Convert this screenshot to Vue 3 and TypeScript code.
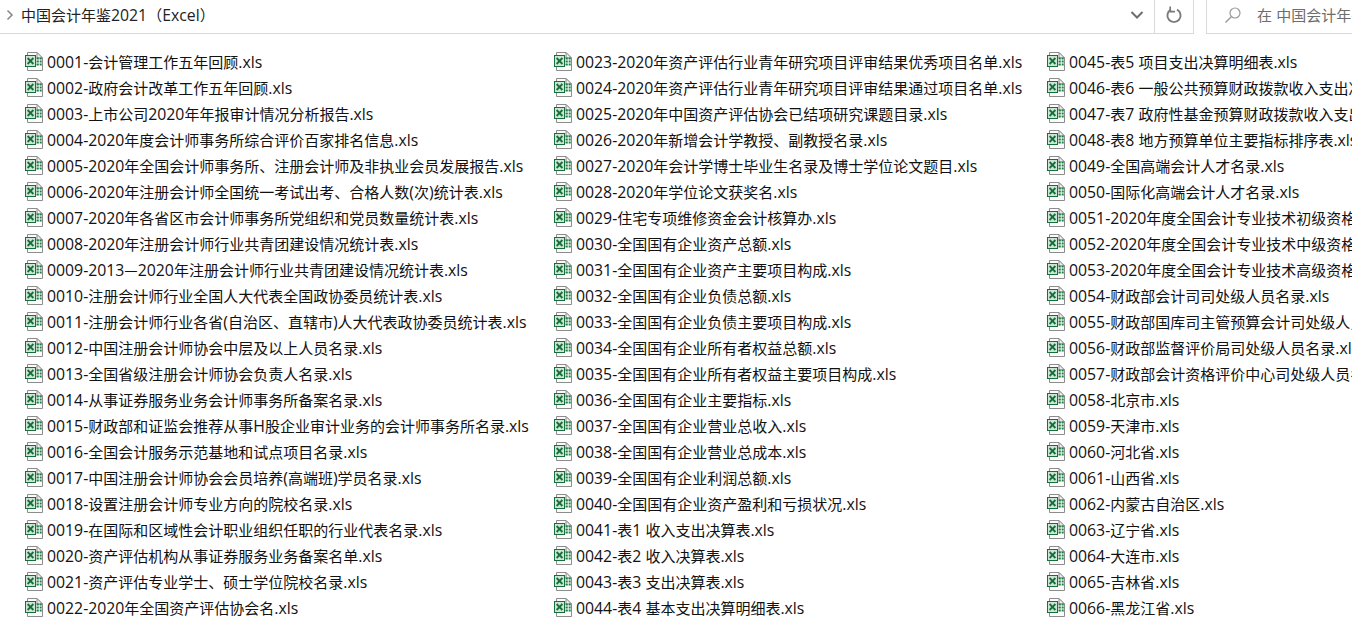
<script setup lang="ts">
interface Run { text: string; latin: boolean }

const runs = (text: string): Run[] =>
  text
    .split(/([\x00-\x7f]+)/)
    .filter((part) => part.length > 0)
    .map((part) => ({ text: part, latin: /^[\x00-\x7f]/.test(part) }))

const title = runs('中国会计年鉴2021（Excel）')
const hint = runs('在 中国会计年鉴2021（Excel）中搜索')

const names: string[][] = [
  [
    '0001-会计管理工作五年回顾.xls',
    '0002-政府会计改革工作五年回顾.xls',
    '0003-上市公司2020年年报审计情况分析报告.xls',
    '0004-2020年度会计师事务所综合评价百家排名信息.xls',
    '0005-2020年全国会计师事务所、注册会计师及非执业会员发展报告.xls',
    '0006-2020年注册会计师全国统一考试出考、合格人数(次)统计表.xls',
    '0007-2020年各省区市会计师事务所党组织和党员数量统计表.xls',
    '0008-2020年注册会计师行业共青团建设情况统计表.xls',
    '0009-2013—2020年注册会计师行业共青团建设情况统计表.xls',
    '0010-注册会计师行业全国人大代表全国政协委员统计表.xls',
    '0011-注册会计师行业各省(自治区、直辖市)人大代表政协委员统计表.xls',
    '0012-中国注册会计师协会中层及以上人员名录.xls',
    '0013-全国省级注册会计师协会负责人名录.xls',
    '0014-从事证券服务业务会计师事务所备案名录.xls',
    '0015-财政部和证监会推荐从事H股企业审计业务的会计师事务所名录.xls',
    '0016-全国会计服务示范基地和试点项目名录.xls',
    '0017-中国注册会计师协会会员培养(高端班)学员名录.xls',
    '0018-设置注册会计师专业方向的院校名录.xls',
    '0019-在国际和区域性会计职业组织任职的行业代表名录.xls',
    '0020-资产评估机构从事证券服务业务备案名单.xls',
    '0021-资产评估专业学士、硕士学位院校名录.xls',
    '0022-2020年全国资产评估协会名.xls',
  ],
  [
    '0023-2020年资产评估行业青年研究项目评审结果优秀项目名单.xls',
    '0024-2020年资产评估行业青年研究项目评审结果通过项目名单.xls',
    '0025-2020年中国资产评估协会已结项研究课题目录.xls',
    '0026-2020年新增会计学教授、副教授名录.xls',
    '0027-2020年会计学博士毕业生名录及博士学位论文题目.xls',
    '0028-2020年学位论文获奖名.xls',
    '0029-住宅专项维修资金会计核算办.xls',
    '0030-全国国有企业资产总额.xls',
    '0031-全国国有企业资产主要项目构成.xls',
    '0032-全国国有企业负债总额.xls',
    '0033-全国国有企业负债主要项目构成.xls',
    '0034-全国国有企业所有者权益总额.xls',
    '0035-全国国有企业所有者权益主要项目构成.xls',
    '0036-全国国有企业主要指标.xls',
    '0037-全国国有企业营业总收入.xls',
    '0038-全国国有企业营业总成本.xls',
    '0039-全国国有企业利润总额.xls',
    '0040-全国国有企业资产盈利和亏损状况.xls',
    '0041-表1 收入支出决算表.xls',
    '0042-表2 收入决算表.xls',
    '0043-表3 支出决算表.xls',
    '0044-表4 基本支出决算明细表.xls',
  ],
  [
    '0045-表5 项目支出决算明细表.xls',
    '0046-表6 一般公共预算财政拨款收入支出决算表.xls',
    '0047-表7 政府性基金预算财政拨款收入支出决算表.xls',
    '0048-表8 地方预算单位主要指标排序表.xls',
    '0049-全国高端会计人才名录.xls',
    '0050-国际化高端会计人才名录.xls',
    '0051-2020年度全国会计专业技术初级资格考试.xls',
    '0052-2020年度全国会计专业技术中级资格考试.xls',
    '0053-2020年度全国会计专业技术高级资格考试.xls',
    '0054-财政部会计司司处级人员名录.xls',
    '0055-财政部国库司主管预算会计司处级人员名录.xls',
    '0056-财政部监督评价局司处级人员名录.xls',
    '0057-财政部会计资格评价中心司处级人员名录.xls',
    '0058-北京市.xls',
    '0059-天津市.xls',
    '0060-河北省.xls',
    '0061-山西省.xls',
    '0062-内蒙古自治区.xls',
    '0063-辽宁省.xls',
    '0064-大连市.xls',
    '0065-吉林省.xls',
    '0066-黑龙江省.xls',
  ],
]

const columns = names.map((col) => col.map((name) => ({ name, runs: runs(name) })))
</script>

<template>
  <div class="explorer">
    <header class="topbar">
      <div class="address">
        <svg class="crumb" width="8" height="12" viewBox="0 0 8 12">
          <path d="M1.5 1.5 L6 6 L1.5 10.5" fill="none" stroke="#8a8a8a" stroke-width="1.6" />
        </svg>
        <span class="path">
          <span v-for="(r, i) in title" :key="i" :class="{ latin: r.latin }">{{ r.text }}</span>
        </span>
        <svg class="drop" width="14" height="10" viewBox="0 0 14 10">
          <path d="M1.5 2 L7 7.5 L12.5 2" fill="none" stroke="#6e6e6e" stroke-width="2" />
        </svg>
      </div>
      <div class="refresh">
        <svg width="18" height="18" viewBox="0 0 18 18">
          <path d="M6 3.6 A6.6 6.6 0 1 0 12 3.6" fill="none" stroke="#7a7a7a" stroke-width="1.9" />
          <path d="M5.2 0.6 L5.2 5.6 L10 5.6" fill="none" stroke="#7a7a7a" stroke-width="1.7" />
        </svg>
      </div>
      <div class="gutter"></div>
      <div class="search">
        <svg class="lens" width="18" height="18" viewBox="0 0 18 18">
          <circle cx="11" cy="7" r="5" fill="none" stroke="#9a9a9a" stroke-width="1.2" />
          <path d="M7.3 10.7 L1.5 16.5" stroke="#9a9a9a" stroke-width="1.4" />
        </svg>
        <span class="hint">
          <span v-for="(r, i) in hint" :key="i" :class="{ latin: r.latin }">{{ r.text }}</span>
        </span>
      </div>
    </header>
    <main class="files">
      <ul v-for="(col, i) in columns" :key="i" class="col" :class="`col${i}`">
        <li v-for="file in col" :key="file.name" class="file">
          <svg class="icon" width="18" height="20" viewBox="0 0 18 20">
            <path d="M2.5 1.5 H12 L17.5 7 V19.5 H2.5 Z" fill="#fcfcfc" stroke="#8c8c8c" />
            <path d="M12 1.5 V7 H17.5 Z" fill="#efefef" stroke="#8c8c8c" />
            <rect x="0.5" y="4.5" width="10" height="11" fill="#cfe6d6" stroke="#17703c" />
            <path d="M2.6 7 L8.4 13 M8.4 7 L2.6 13" stroke="#17703c" stroke-width="1.8" />
            <path d="M11.5 6.5h2.3v2h-2.3zM14.7 6.5h2v2h-2zM11.5 9.5h2.3v2h-2.3zM14.7 9.5h2v2h-2zM11.5 12.5h2.3v2h-2.3zM14.7 12.5h2v2h-2z" fill="#1f8045" />
          </svg>
          <span class="name">
            <span v-for="(r, j) in file.runs" :key="j" :class="{ latin: r.latin }">{{ r.text }}</span>
          </span>
        </li>
      </ul>
    </main>
  </div>
</template>

<style>
html, body { margin: 0; background: #fff; overflow: hidden; }
</style>

<style scoped>
.explorer {
  width: 1352px;
  height: 632px;
  overflow: hidden;
  background: #fff;
  font-family: "Noto Sans CJK SC", "Noto Sans", sans-serif;
  font-size: 15px;
  color: #1a1a1a;
}
.latin {
  font-family: "Open Sans", "Noto Sans", sans-serif;
  font-size: 15.8px;
}
.topbar {
  display: flex;
  height: 34px;
}
.address {
  flex: 0 0 1154px;
  box-sizing: border-box;
  display: flex;
  align-items: center;
  height: 34px;
  border-bottom: 1px solid #d9d9d9;
  padding-left: 6px;
}
.crumb { flex: none; margin-right: 7px; margin-top: -4px; }
.path { line-height: 30px; margin-top: -4px; flex: 1; color: #222; white-space: pre; }
.drop { flex: none; margin-right: 10px; margin-top: -4px; }
.refresh {
  flex: 0 0 40px;
  box-sizing: border-box;
  height: 34px;
  display: flex;
  align-items: center;
  justify-content: center;
  border-left: 1px solid #d9d9d9;
  border-right: 1px solid #d9d9d9;
  border-bottom: 1px solid #d9d9d9;
  padding-bottom: 4px;
}
.gutter { flex: 0 0 12px; }
.search {
  flex: 1;
  min-width: 0;
  box-sizing: border-box;
  height: 34px;
  display: flex;
  align-items: center;
  gap: 15px;
  padding: 0 0 4px 17px;
  border-left: 1px solid #d9d9d9;
  border-bottom: 1px solid #d9d9d9;
  overflow: hidden;
  white-space: pre;
}
.lens { flex: none; }
.hint { flex: none; color: #6d6d6d; }
.files {
  display: flex;
  padding: 15px 0 0 25px;
}
.col { list-style: none; margin: 0; padding: 0; flex: none; }
.col0 { width: 529px; }
.col1 { width: 493px; }
.col2 { flex: 1; min-width: 0; overflow: hidden; }
.file {
  display: flex;
  align-items: center;
  height: 26px;
  white-space: pre;
}
.icon { flex: none; margin-right: 4px; margin-top: -2px; }
.name { line-height: 26px; color: #111; }
</style>
